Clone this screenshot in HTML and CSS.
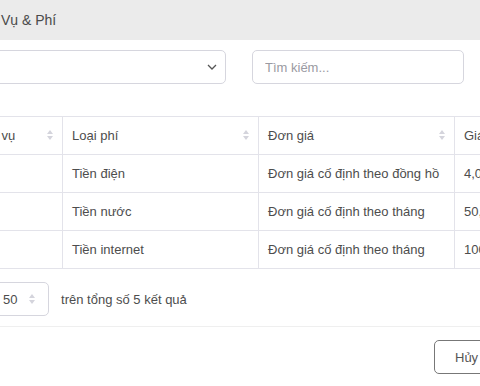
FILE: index.html
```html
<!DOCTYPE html>
<html lang="vi">
<head>
  <meta charset="UTF-8">
  <title>Dịch Vụ &amp; Phí</title>
  <link rel="stylesheet" href="styles.css">
</head>
<body>
  <div class="modal">
    <div class="modal-header">Dịch Vụ &amp; Phí</div>

    <div class="modal-body">
      <div class="filters">
        <div class="select">
          <span class="select-value">Tất cả</span>
          <svg class="chevron" width="10" height="6" viewBox="0 0 10 6"><path d="M1 1l4 4 4-4" fill="none" stroke="#555" stroke-width="1.3"/></svg>
        </div>
        <input class="search" type="text" placeholder="Tìm kiếm...">
      </div>

      <table class="fees">
        <colgroup>
          <col style="width:124px">
          <col style="width:196px">
          <col style="width:196px">
          <col>
        </colgroup>
        <thead>
          <tr>
            <th><span>Tên dịch vụ</span><i class="sort"></i></th>
            <th><span>Loại phí</span><i class="sort"></i></th>
            <th><span>Đơn giá</span><i class="sort"></i></th>
            <th><span>Giá tiền</span><i class="sort"></i></th>
          </tr>
        </thead>
        <tbody>
          <tr><td>Điện</td><td>Tiền điện</td><td>Đơn giá cố định theo đồng hồ</td><td>4,000 đ</td></tr>
          <tr><td>Nước</td><td>Tiền nước</td><td>Đơn giá cố định theo tháng</td><td>50,000 đ</td></tr>
          <tr><td>Mạng</td><td>Tiền internet</td><td>Đơn giá cố định theo tháng</td><td>100,000 đ</td></tr>
        </tbody>
      </table>

      <div class="pager">
        <span class="pager-label">Hiển thị</span>
        <div class="page-size">
          <span>50</span>
          <i class="sort"></i>
        </div>
        <span class="pager-label">trên tổng số 5 kết quả</span>
      </div>
    </div>

    <div class="modal-footer">
      <button class="btn-outline">Hủy</button>
      <button class="btn-primary">Lưu</button>
    </div>
  </div>
</body>
</html>
```

FILE: styles.css
```css
* { box-sizing: border-box; }
body {
  margin: 0;
  overflow: hidden;
  font-family: "Liberation Sans", Arial, sans-serif;
  font-size: 13px;
  color: #4d4d4d;
  background: #fff;
}
.modal {
  width: 660px;
  margin-left: -82px;
  background: #fff;
}
.modal-header {
  height: 40px;
  padding-left: 51px;
  display: flex;
  align-items: center;
  background-color: #ebebeb;
  font-size: 14px;
  color: #4a4a4a;
}
.modal-body {
  padding: 10px 20px 10px 20px;
  border-bottom: 1px solid #efefef;
}
.filters {
  display: grid;
  grid-template-columns: 288px 212px;
  gap: 26px;
}
.select, .search {
  height: 34px;
  border: 1px solid #d6d6de;
  border-radius: 5px;
  background: #fff;
}
.select {
  display: flex;
  align-items: center;
  justify-content: space-between;
  padding: 0 8px 0 12px;
}
.search {
  padding: 0 12px;
  font-family: inherit;
  font-size: 13px;
  color: #4d4d4d;
  outline: none;
}
.search::placeholder { color: #9a9aa2; }

.fees {
  width: 100%;
  margin-top: 32px;
  border-collapse: collapse;
  table-layout: fixed;
}
.fees th, .fees td {
  height: 38px;
  padding: 0 9px;
  border: 1px solid #e3e3ea;
  text-align: left;
  font-weight: normal;
  white-space: nowrap;
  overflow: hidden;
}
.fees th {
  position: relative;
  padding-right: 24px;
}
.fees th .sort {
  position: absolute;
  right: 8px;
  top: 13px;
}

.sort {
  display: inline-block;
  width: 7px;
  height: 10px;
  position: relative;
}
.sort::before, .sort::after {
  content: "";
  position: absolute;
  left: 0;
  border-left: 3.5px solid transparent;
  border-right: 3.5px solid transparent;
}
.sort::before {
  top: 0;
  border-bottom: 4px solid #d4d4dc;
}
.sort::after {
  bottom: 0;
  border-top: 4px solid #d4d4dc;
}

.pager {
  display: flex;
  align-items: center;
  gap: 12px;
  margin-top: 13px;
}
.pager-label { white-space: nowrap; }
.page-size {
  width: 56px;
  height: 34px;
  margin-left: -1px;
  display: flex;
  align-items: center;
  justify-content: space-between;
  padding: 0 12px 0 9px;
  border: 1px solid #d6d6de;
  border-radius: 5px;
}

.modal-footer {
  display: flex;
  gap: 10px;
  padding: 13px 20px;
  padding-left: 516px;
}
.btn-outline, .btn-primary {
  height: 34px;
  padding: 0 20px;
  font-family: inherit;
  font-size: 13px;
  border-radius: 5px;
  cursor: pointer;
}
.btn-outline {
  background: #fff;
  color: #555;
  border: 1px solid #777;
}
.btn-primary {
  background: #2563eb;
  color: #fff;
  border: 1px solid #2563eb;
}
```
